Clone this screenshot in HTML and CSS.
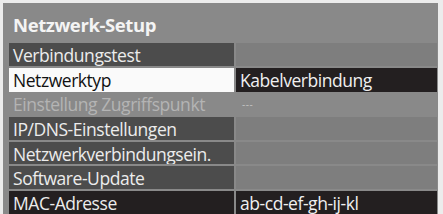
FILE: index.html
```html
<!DOCTYPE html>
<html lang="de">
<head>
    <meta charset="UTF-8">
    <title>Netzwerk-Setup</title>
    <link rel="stylesheet" href="styles.css">
</head>
<body>
    <div class="setup-panel">
        <h1>Netzwerk-Setup</h1>
        <div class="menu">
            <div class="row">
                <div class="label">Verbindungstest</div>
                <div class="value"></div>
            </div>
            <div class="row selected">
                <div class="label">Netzwerktyp</div>
                <div class="value">Kabelverbindung</div>
            </div>
            <div class="row disabled">
                <div class="label">Einstellung Zugriffspunkt</div>
                <div class="value">---</div>
            </div>
            <div class="row">
                <div class="label">IP/DNS-Einstellungen</div>
                <div class="value"></div>
            </div>
            <div class="row">
                <div class="label">Netzwerkverbindungsein.</div>
                <div class="value"></div>
            </div>
            <div class="row">
                <div class="label">Software-Update</div>
                <div class="value"></div>
            </div>
            <div class="row info">
                <div class="label">MAC-Adresse</div>
                <div class="value">ab-cd-ef-gh-ij-kl</div>
            </div>
        </div>
    </div>
</body>
</html>
```

FILE: styles.css
```css
html, body {
    margin: 0;
    padding: 0;
}
body {
    font-family: 'Open Sans', 'DejaVu Sans', sans-serif;
    background: #ececec;
    width: 443px;
    height: 214px;
    overflow: hidden;
}
.setup-panel {
    margin: 3px 5px 0 3px;
    height: 211px;
    background: #898989;
    padding: 0 1px 0 6px;
}
h1 {
    margin: 0;
    height: 40px;
    padding-left: 4px;
    font-size: 18.5px;
    font-weight: bold;
    line-height: 43px;
    color: #f4f4f4;
    letter-spacing: -0.4px;
}
.menu {
    display: flex;
    flex-direction: column;
    gap: 2px;
}
.row {
    display: grid;
    grid-template-columns: 225px 1fr;
    gap: 2px;
    height: 22.7px;
    font-size: 17.5px;
    line-height: 24px;
    letter-spacing: -0.45px;
}
.label {
    padding-left: 4px;
    background: #4c4c4c;
    color: #ececec;
    white-space: nowrap;
    overflow: hidden;
}
.value {
    padding-left: 4px;
    background: #7e7e7e;
    color: #f0f0f0;
}
.row.selected .label {
    background: #fafafa;
    color: #111;
}
.row.selected .value {
    background: #231f20;
}
.row.disabled .label {
    background: #898989;
    color: #b4b4b4;
}
.row.disabled .value {
    background: #898989;
    color: #c4c4c4;
    font-size: 10px;
    letter-spacing: 0.5px;
    padding-left: 6px;
}
.row.info .label,
.row.info .value {
    background: #231f20;
}
```
